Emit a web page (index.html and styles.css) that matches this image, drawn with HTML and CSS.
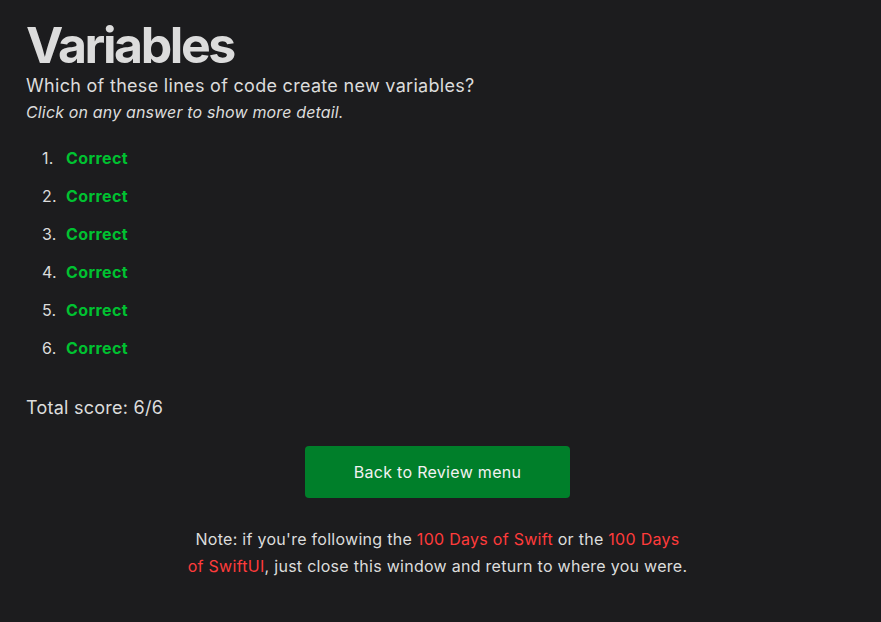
FILE: index.html
```html
<!DOCTYPE html>
<html lang="en">
<head>
<meta charset="utf-8">
<title>Variables</title>
<link rel="stylesheet" href="styles.css">
</head>
<body>
<main class="page">
  <h1 class="title">Variables</h1>
  <p class="question">Which of these lines of code create new variables?</p>
  <p class="hint">Click on any answer to show more detail.</p>
  <ol class="answers">
    <li class="answer"><span class="correct">Correct</span></li>
    <li class="answer"><span class="correct">Correct</span></li>
    <li class="answer"><span class="correct">Correct</span></li>
    <li class="answer"><span class="correct">Correct</span></li>
    <li class="answer"><span class="correct">Correct</span></li>
    <li class="answer"><span class="correct">Correct</span></li>
  </ol>
  <p class="score">Total score: 6/6</p>
  <div class="actions">
    <a class="button" href="#">Back to Review menu</a>
  </div>
  <p class="note">Note: if you're following the <a class="link" href="#">100 Days of Swift</a> or the <a class="link" href="#">100 Days of SwiftUI</a>, just close this window and return to where you were.</p>
</main>
</body>
</html>
```
FILE: styles.css
```css
html, body {
  margin: 0;
  padding: 0;
  background: #1c1c1e;
}
body {
  font-family: Inter, "Noto Sans", sans-serif;
  color: #dcdcdc;
}
.page {
  padding: 15px 32px 0 26px;
}
.title {
  margin: 0;
  font-size: 50px;
  font-weight: 700;
  line-height: 60px;
  letter-spacing: -2.4px;
  color: #dcdcdc;
}
.question {
  margin: -1px 0 0;
  font-size: 18px;
  line-height: 24px;
  letter-spacing: 0.3px;
}
.hint {
  margin: 3px 0 0;
  font-size: 16px;
  font-style: italic;
  line-height: 22px;
  letter-spacing: 0.15px;
}
.answers {
  margin: 24px 0 0;
  padding: 0;
  list-style: none;
  counter-reset: item;
  font-size: 16px;
}
.answer {
  display: flex;
  line-height: 22px;
  margin-bottom: 16px;
  counter-increment: item;
}
.answer::before {
  content: counter(item) ".";
  width: 24px;
  margin-left: 16px;
  letter-spacing: 0.3px;
}
.correct {
  color: #00c231;
  font-weight: 700;
  letter-spacing: 0.4px;
}
.score {
  margin: 37px 0 0;
  font-size: 18px;
  line-height: 24px;
  letter-spacing: 0.25px;
}
.actions {
  display: flex;
  justify-content: center;
  margin-top: 26px;
}
.button {
  display: flex;
  align-items: center;
  justify-content: center;
  width: 265px;
  height: 52px;
  background: #007f2a;
  color: #f2f2f2;
  border-radius: 4px;
  font-size: 16px;
  letter-spacing: 0.3px;
  text-decoration: none;
}
.note {
  max-width: 500px;
  margin: 28px auto 0;
  text-align: center;
  font-size: 16px;
  line-height: 27px;
  letter-spacing: 0.28px;
}
.link {
  color: #ff3b3b;
  text-decoration: none;
}
```
